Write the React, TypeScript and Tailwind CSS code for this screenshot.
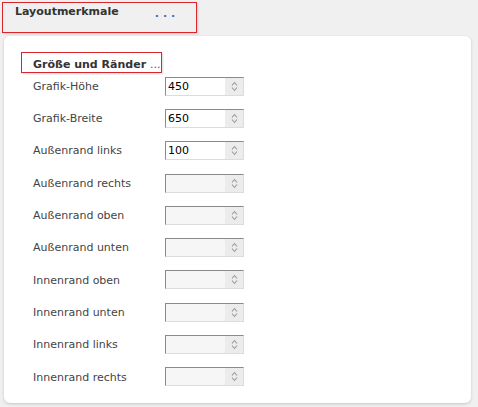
import React from 'react'

const rows: { label: string; value?: string }[] = [
  { label: 'Grafik-Höhe', value: '450' },
  { label: 'Grafik-Breite', value: '650' },
  { label: 'Außenrand links', value: '100' },
  { label: 'Außenrand rechts' },
  { label: 'Außenrand oben' },
  { label: 'Außenrand unten' },
  { label: 'Innenrand oben' },
  { label: 'Innenrand unten' },
  { label: 'Innenrand links' },
  { label: 'Innenrand rechts' },
]

function Spinner() {
  return (
    <div className="w-[18px] h-full flex items-center justify-center bg-[#ececec]">
      <svg width="7" height="11" viewBox="0 0 7 11" fill="none" stroke="#9a9a9a" strokeWidth="1.1">
        <path d="M1 4.5 L3.5 1.5 L6 4.5" />
        <path d="M1 6.5 L3.5 9.5 L6 6.5" />
      </svg>
    </div>
  )
}

function NumberField({ value }: { value?: string }) {
  const filled = value !== undefined
  return (
    <div
      className={`w-[79px] h-[19px] flex border-t border-l border-t-[#8a8a8a] border-l-[#8a8a8a] border-r border-b border-r-[#dcdcdc] border-b-[#dcdcdc] ${filled ? 'bg-white' : 'bg-[#f6f6f6]'}`}
    >
      <div className="flex-1 pl-[2px] text-[11px] leading-[18px] text-black">{value}</div>
      <Spinner />
    </div>
  )
}

export default function App() {
  return (
    <div className="w-[478px] h-[407px] bg-[#f0f0f0] font-['DejaVu_Sans',sans-serif] overflow-hidden">
      <div className="pt-[2px] pl-[2px]">
        <div className="w-[195px] h-[31px] border border-[#d9262c] flex items-start pt-[1px] pl-[12px] shadow-[1px_1px_2px_rgba(0,0,0,0.15)]">
          <span className="text-[11px] font-bold text-[#333]">Layoutmerkmale</span>
          <span className="ml-[36px] mt-[2px] text-[11px] font-bold text-[#3b6db5] tracking-[4px]">...</span>
        </div>
      </div>

      <div className="ml-[4px] mt-[3px] w-[467px] h-[367px] bg-white rounded-[6px] shadow-[0_1px_3px_rgba(0,0,0,0.18)] pt-[16px]">
        <div className="ml-[17px] w-[141px] h-[21px] border border-[#d9262c] pl-[11px] pt-[5px] shadow-[1px_1px_2px_rgba(0,0,0,0.15)]">
          <span className="text-[11px] leading-[13px] font-bold text-[#333] block">
            Größe und Ränder <span className="font-normal text-[#555]">...</span>
          </span>
        </div>

        <div className="mt-[-3px] flex flex-col">
          {rows.map((r) => (
            <div key={r.label} className="h-[32.3px] flex items-center pl-[29px]">
              <div className="w-[132px] text-[11px] text-[#444] pt-[2px]">{r.label}</div>
              <NumberField value={r.value} />
            </div>
          ))}
        </div>
      </div>
    </div>
  )
}
